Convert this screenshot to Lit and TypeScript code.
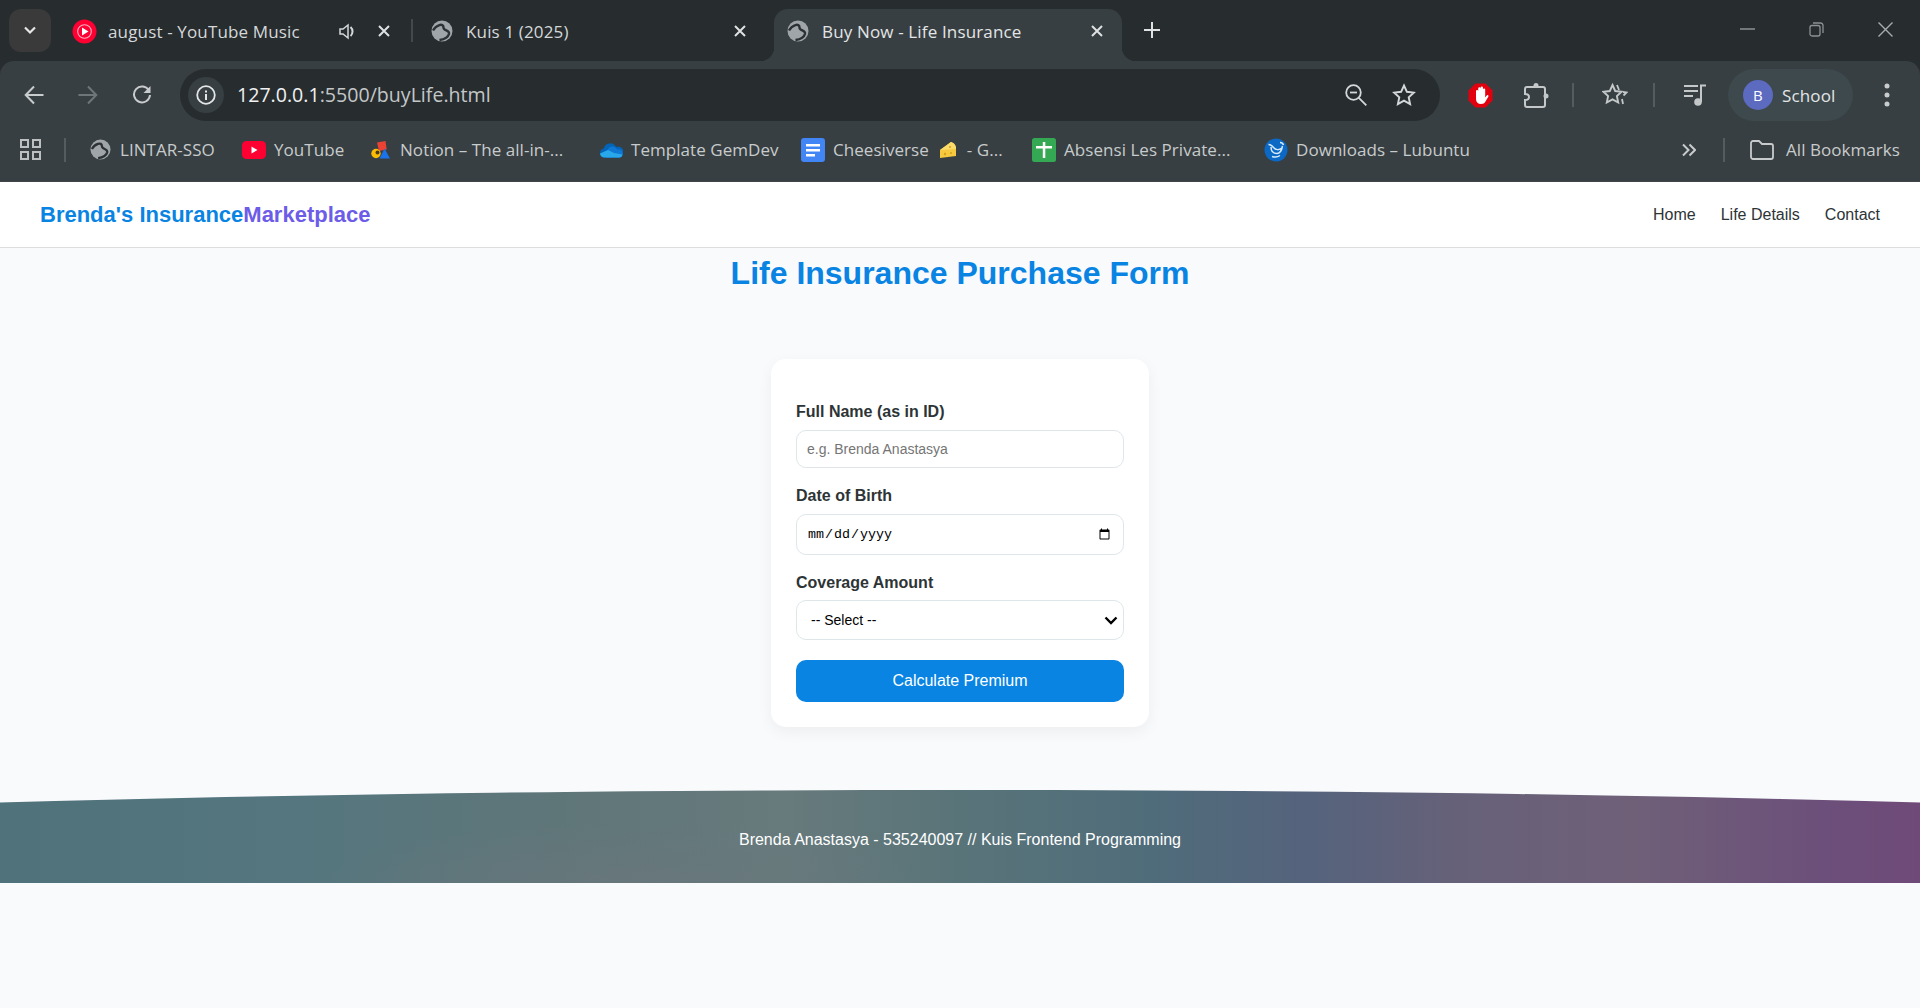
import { LitElement, html, css } from "lit";
import { customElement } from "lit/decorators.js";

const globe = (size = 22) => html`<svg width=${size} height=${size} viewBox="0 0 22 22">
  <circle cx="11" cy="11" r="10.500" fill="#a0a5a9" />
  <path d="M2 10.500C5 5 12.500 2.500 12.500 7.500C12.500 11 19 10 18 14C17 17.500 12 19.500 8.500 20" fill="none" stroke="#2b3134" stroke-width="2.400" />
</svg>`;

const close = html`<svg width="14" height="14" viewBox="0 0 14 14"><path d="M2 2l10 10M12 2L2 12" stroke="#dfe1e2" stroke-width="2" fill="none" /></svg>`;

const ytMusic = html`<svg width="25" height="25" viewBox="0 0 25 25">
  <circle cx="12.500" cy="12.500" r="12" fill="#ff0033" />
  <circle cx="12.500" cy="12.500" r="6.800" fill="none" stroke="#ffb3c2" stroke-width="1.100" />
  <path d="M10 8.500v8l6.500-4z" fill="#fff" />
</svg>`;

const ytIcon = html`<svg width="24" height="18" viewBox="0 0 24 18">
  <rect width="24" height="18" rx="4.500" fill="#ff0033" />
  <path d="M9.500 5.500v7l6-3.500z" fill="#fff" />
</svg>`;

const notionIcon = html`<svg width="19" height="18" viewBox="0 0 19 18">
  <path d="M6 1.500L14.500 0l1.200 8.500L8 10z" fill="#ea4335" />
  <circle cx="5" cy="12.500" r="4.700" fill="#fbbc04" />
  <circle cx="6.500" cy="11.500" r="2" fill="#4a3a20" />
  <path d="M13.500 7.500L19 17.500H8.500z" fill="#1a73e8" />
</svg>`;

const cloudIcon = html`<svg width="24" height="16" viewBox="0 0 24 16">
  <path d="M5 15.500A4.500 4.500 0 0 1 4.800 6.600 6.500 6.500 0 0 1 17 5a5 5 0 0 1 4 10.500z" fill="#0364b8" />
  <path d="M8 15.500a3.500 3.500 0 0 1 .5-7 5 5 0 0 1 9.500-1A4 4 0 0 1 23.500 12a3.500 3.500 0 0 1-3 3.500z" fill="#0f78d4" />
  <path d="M1 11.500L9 8l6 3 8.500 1.500a3.500 3.500 0 0 1-3 3H5A4.500 4.500 0 0 1 1 11.500z" fill="#28a8ea" />
</svg>`;

const docsIcon = html`<svg width="24" height="24" viewBox="0 0 24 24">
  <rect width="24" height="24" rx="3" fill="#4285f4" />
  <path d="M5 6h14v2.500H5zM5 11h14v2.500H5zM5 16h9v2.500H5z" fill="#fff" />
</svg>`;

const sheetsIcon = html`<svg width="24" height="24" viewBox="0 0 24 24">
  <rect width="24" height="24" rx="2.500" fill="#34a853" />
  <path d="M4 8h16v2.500H4zM10.800 4h2.500v16h-2.500z" fill="#fff" />
</svg>`;

const lubuntuIcon = html`<svg width="24" height="24" viewBox="0 0 24 24">
  <circle cx="12" cy="12" r="11.500" fill="#0b68c4" />
  <path d="M4.500 6.500c2 0 3.500 1 5 3 2 2.500 5.500 3 8.500 .5M7 9c0 4 2 6.500 6 6.500 2.500 0 4.500-2 5.500-7.500M16 4.500c2 0 3 1 3.500 2.500M8 18.500c3 1 6 .5 8-1" fill="none" stroke="#d7ecfb" stroke-width="1.500" />
</svg>`;

const cheeseIcon = html`<svg width="18" height="18" viewBox="0 0 18 18">
  <path d="M1 9l11-8c3 1 5 3 5 7v7l-16 2z" fill="#f7c93e" />
  <path d="M1 9l11-8c3 1 5 3 5 7z" fill="#fbdc6a" />
  <circle cx="6" cy="13" r="1.200" fill="#d99e1e" /><circle cx="12" cy="12" r="1" fill="#d99e1e" /><circle cx="11" cy="6" r="1" fill="#d99e1e" />
</svg>`;

const bookmarks = [
  { label: html`LINTAR-SSO`, icon: globe(21), width: 154 },
  { label: html`YouTube`, icon: ytIcon, width: 126 },
  { label: html`Notion – The all-in-...`, icon: notionIcon, width: 231 },
  { label: html`Template GemDev`, icon: cloudIcon, width: 202 },
  { label: html`Cheesiverse <span class="emoji">${cheeseIcon}</span> - G...`, icon: docsIcon, width: 231 },
  { label: html`Absensi Les Private...`, icon: sheetsIcon, width: 232 },
  { label: html`Downloads – Lubuntu`, icon: lubuntuIcon, width: 418 },
];

@customElement("browser-chrome")
export class BrowserChrome extends LitElement {
  static styles = css`
    :host {
      display: block;
      height: 182px;
      background: #272c2f;
      font-family: "Open Sans", "Noto Sans", sans-serif;
      color: #d5d8d9;
      font-size: 17px;
      letter-spacing: 0.15px;
    }
    svg { display: block; }
    .strip {
      height: 61px;
      display: flex;
      align-items: flex-start;
    }
    .tabs-btn {
      width: 42px;
      height: 43px;
      margin: 9px 0 0 9px;
      border-radius: 12px;
      background: #3a3a3a;
      display: flex;
      align-items: center;
      justify-content: center;
    }
    .tab {
      height: 52px;
      margin-top: 9px;
      display: flex;
      align-items: center;
      padding-bottom: 8px;
      box-sizing: border-box;
      white-space: nowrap;
      position: relative;
    }
    .tab span { flex: 1; }
    .tab1 { width: 319px; margin-left: 21px; }
    .tab1 span { margin-left: 11px; }
    .speaker { margin-right: 21px; }
    .divider { width: 2px; height: 23px; margin-top: 19px; background: #43494c; margin-left: 20px; }
    .tab2 { width: 316px; margin-left: 18px; }
    .tab2 span { margin-left: 13px; }
    .tab3 {
      width: 348px;
      margin-left: 27px;
      padding: 0 18px 8px 13px;
      background: #373f42;
      border-radius: 14px 14px 0 0;
      color: #e3e5e6;
    }
    .tab3 span { margin-left: 13px; }
    .tab3::before, .tab3::after {
      content: "";
      position: absolute;
      bottom: 0;
      width: 14px;
      height: 14px;
    }
    .tab3::before { left: -14px; background: radial-gradient(circle at 0 0, #272c2f 14px, #373f42 14.500px); }
    .tab3::after { right: -14px; background: radial-gradient(circle at 100% 0, #272c2f 14px, #373f42 14.500px); }
    .plus { margin: 22px 0 0 22px; }
    .window {
      margin-left: auto;
      display: flex;
      align-items: center;
      height: 58px;
    }
    .min { margin-right: 54px; }
    .restore { margin-right: 54px; }
    .closewin { margin-right: 27px; }

    .toolbar {
      height: 61px;
      background: #373f42;
      border-radius: 14px 14px 0 0;
      display: flex;
      align-items: flex-start;
      padding: 8px 0 0 7px;
      box-sizing: border-box;
    }
    .tb {
      width: 54px;
      height: 52px;
      display: flex;
      align-items: center;
      justify-content: center;
      flex: none;
    }
    .wide { width: 56px; }
    .address {
      width: 1260px;
      height: 52px;
      margin-left: 11px;
      margin-right: 12px;
      border-radius: 26px;
      background: #272c2f;
      display: flex;
      align-items: center;
      flex: none;
      box-sizing: border-box;
      padding-left: 8px;
    }
    .info {
      width: 36px;
      height: 36px;
      border-radius: 50%;
      background: #373f42;
      display: flex;
      align-items: center;
      justify-content: center;
    }
    .url { margin-left: 13px; padding-bottom: 2px; font-size: 19.600px; letter-spacing: 0; color: #c3c7c8; flex: 1; white-space: nowrap; }
    .url b { font-weight: 400; color: #f0f1f2; }
    .zoom { margin-right: 25px; }
    .star { margin-right: 24px; }
    .vsep { width: 2px; height: 24px; background: #555c5f; flex: none; margin-top: 14px; }
    .s1 { margin-left: 8px; }
    .s2 { margin-left: 10px; }
    .after-s1 { margin-left: 13px; }
    .after-s2 { margin-left: 12px; }
    .pill {
      width: 125px;
      height: 52px;
      margin-left: 5px;
      border-radius: 26px;
      background: #3d494d;
      display: flex;
      align-items: center;
      padding: 0 0 0 15px;
      box-sizing: border-box;
      flex: none;
      color: #e3e5e6;
    }
    .avatar {
      width: 30px;
      height: 30px;
      border-radius: 50%;
      background: #5c6bc0;
      display: flex;
      align-items: center;
      justify-content: center;
      font-size: 15px;
      color: #fff;
      margin-right: 9px;
    }
    .kebab { margin-left: 6px; }

    .bookmarks {
      height: 60px;
      background: #373f42;
      display: flex;
      align-items: center;
      padding-bottom: 4px;
      box-sizing: border-box;
      border-bottom: 1px solid #3f4548;
      white-space: nowrap;
      color: #c8cbcc;
      letter-spacing: 0.05px;
    }
    .apps { margin-left: 20px; }
    .bsep { width: 2px; height: 24px; background: #555c5f; margin: 0 22px 0 23px; flex: none; }
    .bm {
      display: flex;
      align-items: center;
      flex: none;
    }
    .bm-icon {
      width: 24px;
      margin-right: 8px;
      display: flex;
      justify-content: center;
      flex: none;
    }
    .emoji { display: inline-block; vertical-align: -3px; margin: 0 5px 0 6px; }
    .bsep2 { margin: 0 25px 0 27px; }
    .folder { margin-right: 12px; }
  `;

  protected render() {
    return html`
      <div class="strip">
        <div class="tabs-btn">
          <svg width="14" height="9" viewBox="0 0 14 9"><path d="M2 1.500l5 5 5-5" stroke="#e6e6e6" stroke-width="2.200" fill="none" /></svg>
        </div>
        <div class="tab tab1">
          ${ytMusic}<span>august - YouTube Music</span>
          <svg class="speaker" width="17" height="17" viewBox="0 0 17 17"><path d="M1 6h3l5-4v13l-5-4H1z" fill="none" stroke="#d5d8d9" stroke-width="1.500" /><path d="M11.500 4a6 6 0 0 1 0 9" fill="none" stroke="#d5d8d9" stroke-width="2" /></svg>
          ${close}
        </div>
        <div class="divider"></div>
        <div class="tab tab2">${globe()}<span>Kuis 1 (2025)</span>${close}</div>
        <div class="tab tab3">${globe()}<span>Buy Now - Life Insurance</span>${close}</div>
        <div class="plus">
          <svg width="16" height="16" viewBox="0 0 16 16"><path d="M8 0v16M0 8h16" stroke="#dfe1e2" stroke-width="2" /></svg>
        </div>
        <div class="window">
          <svg class="min" width="15" height="2" viewBox="0 0 15 2"><path d="M0 1h15" stroke="#8d9294" stroke-width="1.500" /></svg>
          <svg class="restore" width="15" height="15" viewBox="0 0 15 15"><rect x="1" y="3.500" width="10" height="10.500" rx="2" fill="none" stroke="#8d9294" stroke-width="1.300" /><path d="M4 1h7.500a2.500 2.500 0 0 1 2.500 2.500V11" fill="none" stroke="#8d9294" stroke-width="1.300" /></svg>
          <svg class="closewin" width="15" height="15" viewBox="0 0 15 15"><path d="M.5.5l14 14M14.500.5l-14 14" stroke="#a8acae" stroke-width="1.400" /></svg>
        </div>
      </div>

      <div class="toolbar">
        <div class="tb"><svg width="20" height="20" viewBox="0 0 20 20"><path d="M19.500 10H2M10 1.500L1.700 10l8.300 8.500" fill="none" stroke="#c9cccd" stroke-width="2" /></svg></div>
        <div class="tb"><svg width="20" height="20" viewBox="0 0 20 20"><path d="M.5 10H18M10 1.500l8.300 8.500-8.300 8.500" fill="none" stroke="#6f7679" stroke-width="2" /></svg></div>
        <div class="tb"><svg width="20" height="20" viewBox="0 0 20 20"><path d="M17 5.500A8 8 0 1 0 18 10" fill="none" stroke="#c9cccd" stroke-width="2" /><path d="M18.500 1v7h-7z" fill="#c9cccd" /></svg></div>
        <div class="address">
          <div class="info">
            <svg width="20" height="20" viewBox="0 0 20 20"><circle cx="10" cy="10" r="8.800" fill="none" stroke="#e3e5e6" stroke-width="1.800" /><path d="M9 9h2v6H9zM9 5.500h2v2H9z" fill="#e3e5e6" /></svg>
          </div>
          <div class="url"><b>127.0.0.1</b>:5500/buyLife.html</div>
          <svg class="zoom" width="22" height="22" viewBox="0 0 22 22"><circle cx="8.500" cy="8.500" r="7.300" fill="none" stroke="#d5d8d9" stroke-width="1.800" /><path d="M13.800 13.800l7.500 7.500" stroke="#d5d8d9" stroke-width="1.800" /><path d="M5 8.500h7" stroke="#d5d8d9" stroke-width="1.800" /></svg>
          <svg class="star" width="24" height="24" viewBox="0 0 24 24"><path d="M12 2.500l2.900 6.300 6.900.8-5.100 4.700 1.400 6.800-6.100-3.400-6.100 3.400 1.400-6.800-5.100-4.700 6.900-.8z" fill="none" stroke="#d5d8d9" stroke-width="1.900" /></svg>
        </div>
        <div class="tb wide">
          <svg width="25" height="25" viewBox="0 0 25 25">
            <path d="M7.500.5h10l7 7v10l-7 7h-10l-7-7v-10z" fill="#e2000f" />
            <path d="M8 8a1.100 1.100 0 0 1 2.200 0V5.500a1.200 1.200 0 0 1 2.400 0V4.800a1.200 1.200 0 0 1 2.400 0v1.700a1.100 1.100 0 0 1 2.200 0v8l1.500-2c1-1 2.300 0 1.600 1.200l-3 5c-.8 1.300-2 2.300-4.300 2.300-3 0-4.900-1.800-5-5z" fill="#fff" />
          </svg>
        </div>
        <div class="tb wide">
          <svg width="25" height="27" viewBox="0 0 25 27">
            <path d="M3 5h16a2 2 0 0 1 2 2v16a2 2 0 0 1-2 2H3a2 2 0 0 1-2-2v-5c3 0 4-1.500 4-3s-1-3-4-3V7a2 2 0 0 1 2-2z" fill="none" stroke="#c4c8c9" stroke-width="2" />
            <circle cx="12" cy="3.500" r="2.500" fill="#c4c8c9" /><circle cx="22" cy="14" r="2.500" fill="#c4c8c9" />
          </svg>
        </div>
        <div class="vsep s1"></div>
        <div class="tb wide after-s1">
          <svg width="26" height="26" viewBox="0 0 26 26"><path d="M10.500 3l2.700 6 6.400.7-4.700 4.400 1.300 6.400-5.700-3.200-5.700 3.200 1.300-6.400L1.400 9.700l6.400-.7z" fill="none" stroke="#c4c8c9" stroke-width="1.900" /><path d="M15 3l2 5M21 10l3.500.5-3 3M20 17l1 5" fill="none" stroke="#c4c8c9" stroke-width="1.800" /></svg>
        </div>
        <div class="vsep s2"></div>
        <div class="tb wide after-s2">
          <svg width="24" height="22" viewBox="0 0 24 22"><path d="M1 2h14M1 7h14M1 12h9" stroke="#c4c8c9" stroke-width="2" /><path d="M18 18V1.500h5" fill="none" stroke="#c4c8c9" stroke-width="2" /><circle cx="15" cy="18" r="3.800" fill="#c4c8c9" /></svg>
        </div>
        <div class="pill"><div class="avatar">B</div>School</div>
        <div class="tb wide kebab">
          <svg width="6" height="24" viewBox="0 0 6 24"><circle cx="3" cy="3" r="2.500" fill="#c9cccd" /><circle cx="3" cy="12" r="2.500" fill="#c9cccd" /><circle cx="3" cy="21" r="2.500" fill="#c9cccd" /></svg>
        </div>
      </div>

      <div class="bookmarks">
        <svg class="apps" width="21" height="21" viewBox="0 0 21 21" fill="none" stroke="#bcc0c1" stroke-width="2">
          <rect x="1" y="1" width="7" height="7" /><rect x="13" y="1" width="7" height="7" />
          <rect x="1" y="13" width="7" height="7" /><rect x="13" y="13" width="7" height="7" />
        </svg>
        <div class="bsep"></div>
        ${bookmarks.map(
          (b) => html`<div class="bm" style="width:${b.width}px"><div class="bm-icon">${b.icon}</div><div>${b.label}</div></div>`,
        )}
        <svg width="14" height="14" viewBox="0 0 14 14"><path d="M1 1.500L6.500 7 1 12.500M7.500 1.500L13 7l-5.500 5.500" fill="none" stroke="#c8cbcc" stroke-width="2" /></svg>
        <div class="bsep bsep2"></div>
        <svg class="folder" width="24" height="20" viewBox="0 0 24 20"><path d="M1 3a2 2 0 0 1 2-2h6l3 3h9a2 2 0 0 1 2 2v11a2 2 0 0 1-2 2H3a2 2 0 0 1-2-2z" fill="none" stroke="#c8cbcc" stroke-width="1.800" /></svg>
        <div>All Bookmarks</div>
      </div>
    `;
  }
}

@customElement("app-root")
export class AppRoot extends LitElement {
  static styles = css`
    :host {
      display: block;
      min-height: 1008px;
      background: #f9fafc;
      font-family: "Liberation Sans", Arial, sans-serif;
      color: #2d3436;
    }
    .nav {
      height: 65px;
      background: #fff;
      border-bottom: 1px solid #dddddd;
      display: flex;
      align-items: center;
      justify-content: space-between;
      padding: 0 40px;
    }
    .logo {
      font-size: 22px;
      font-weight: 700;
      color: #0984e3;
    }
    .logo span { color: #6c5ce7; }
    .links {
      display: flex;
      gap: 25px;
      font-size: 16px;
    }
    h1 {
      margin: 7px 0 0;
      font-size: 32px;
      line-height: 37px;
      font-weight: 700;
      text-align: center;
      color: #0984e3;
    }
    .card {
      width: 378px;
      box-sizing: border-box;
      margin: 67px auto 63px;
      padding: 44px 25px 25px;
      background: #fff;
      border-radius: 15px;
      box-shadow: 0 5px 15px rgba(0, 0, 0, 0.05);
    }
    label {
      display: block;
      font-size: 16px;
      font-weight: 700;
      line-height: 18px;
      margin-bottom: 9px;
    }
    label.tight { margin-bottom: 8px; }
    input, select {
      display: block;
      width: 100%;
      box-sizing: border-box;
      background: #fff;
      border: 1px solid #dfe6e9;
      border-radius: 10px;
      font-family: "Liberation Sans", Arial, sans-serif;
      font-size: 14px;
      margin-bottom: 19px;
      outline: none;
    }
    input { padding: 0 10px; height: 38px; }
    input::placeholder { color: #757575; }
    input[type="date"] {
      height: 41px;
      font-family: "Liberation Mono", monospace;
      font-size: 13.333px;
      color: #000;
    }
    select {
      height: 40px;
      padding: 0 14px;
      margin-bottom: 20px;
      color: #000;
      appearance: none;
      background-image: url("data:image/svg+xml,%3Csvg xmlns='http://www.w3.org/2000/svg' width='14' height='9' viewBox='0 0 14 9'%3E%3Cpath d='M1.500 1.500L7 7l5.500-5.500' fill='none' stroke='%23000' stroke-width='2.400'/%3E%3C/svg%3E");
      background-repeat: no-repeat;
      background-position: right 5px center;
    }
    button {
      display: block;
      width: 100%;
      height: 42px;
      border: 0;
      border-radius: 10px;
      background: #0984e3;
      color: #fff;
      font-family: "Liberation Sans", Arial, sans-serif;
      font-size: 16px;
    }
    footer {
      height: 93px;
      box-sizing: border-box;
      padding-top: 41px;
      text-align: center;
      font-size: 16px;
      line-height: 18px;
      color: #fff;
      background:
        radial-gradient(ellipse 300px 60px at 620px 93px, rgba(106, 118, 124, 0.7), rgba(106, 118, 124, 0)),
        linear-gradient(90deg, #4f727b 0%, #55767e 16%, #5f7679 29%, #677a7c 41%, #597479 50%, #4f6c7a 60%, #55637c 68%, #666179 76%, #6f6078 85%, #6c4f7a 95%, #6f4a78 100%);
      clip-path: ellipse(100% 100% at 50% 100%);
    }
  `;

  protected render() {
    return html`
      <browser-chrome></browser-chrome>
      <div class="nav">
        <div class="logo">Brenda's Insurance<span>Marketplace</span></div>
        <div class="links"><div>Home</div><div>Life Details</div><div>Contact</div></div>
      </div>
      <h1>Life Insurance Purchase Form</h1>
      <div class="card">
        <label>Full Name (as in ID)</label>
        <input type="text" placeholder="e.g. Brenda Anastasya" />
        <label>Date of Birth</label>
        <input type="date" />
        <label class="tight">Coverage Amount</label>
        <select><option>-- Select --</option></select>
        <button>Calculate Premium</button>
      </div>
      <footer>Brenda Anastasya - 535240097 // Kuis Frontend Programming</footer>
    `;
  }
}
